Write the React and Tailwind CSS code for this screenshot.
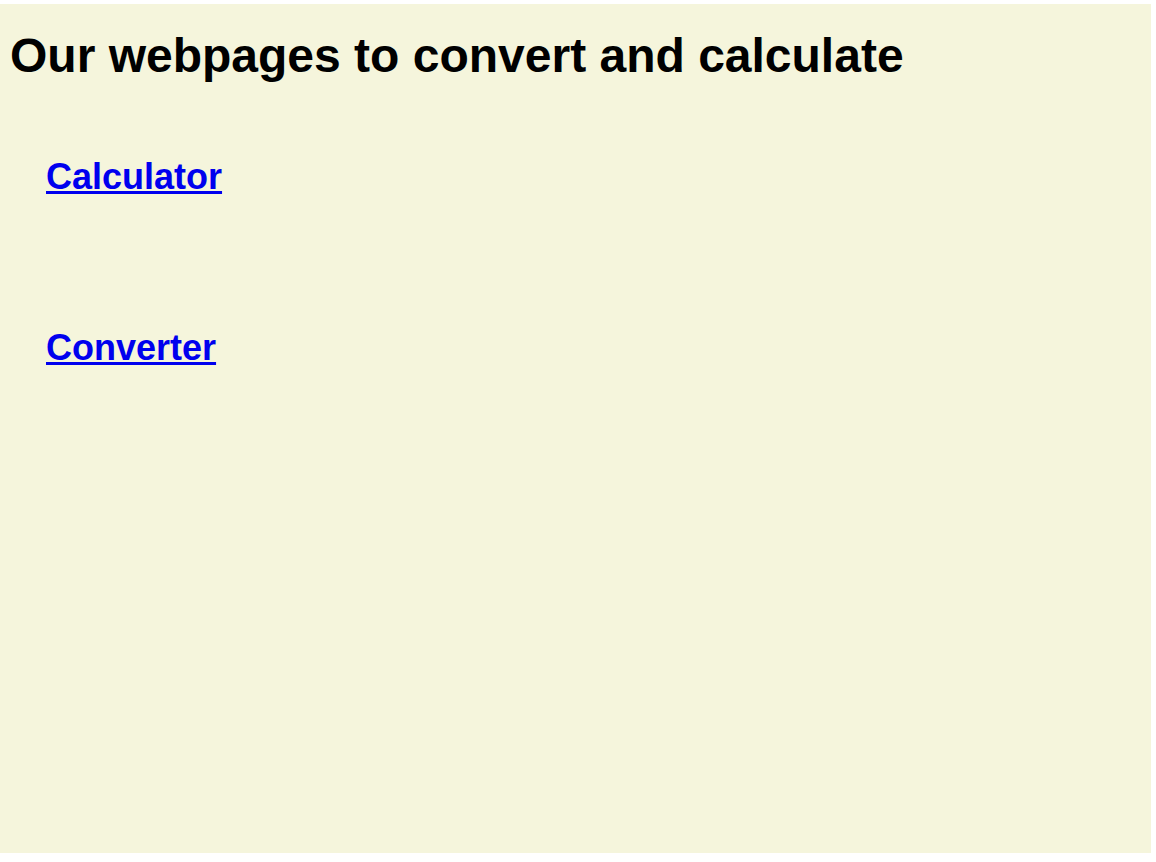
export default function App() {
  return (
    <div className="h-[862px] w-[1156px] bg-white pt-[4px] font-['Liberation_Sans',Arial,sans-serif]">
      <div className="h-[849px] w-[1151px] bg-[#f5f5dc] pl-[10px] pt-[28px]">
        <h1 className="text-[48px] font-bold leading-[48px] text-black">
          Our webpages to convert and calculate
        </h1>
        <ul className="mt-[79px] flex flex-col gap-[134px] pl-[36px]">
          <li>
            <a href="#" className="text-[36px] font-bold leading-[36px] text-[#0000ee] underline">
              Calculator
            </a>
          </li>
          <li>
            <a href="#" className="text-[36px] font-bold leading-[36px] text-[#0000ee] underline">
              Converter
            </a>
          </li>
        </ul>
      </div>
    </div>
  )
}
